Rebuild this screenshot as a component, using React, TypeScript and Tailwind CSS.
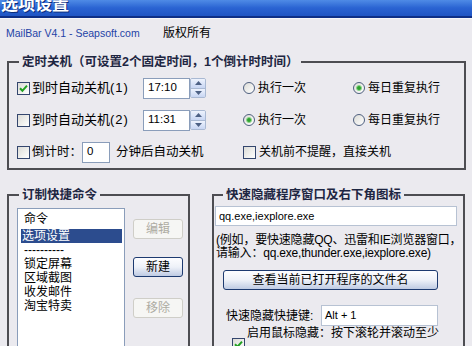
import React from "react";

function Check({ checked = false }: { checked?: boolean }) {
  return (
    <span className="w-[13px] h-[13px] shrink-0 border border-[#34466E] bg-gradient-to-br from-[#DCDCD7] to-white flex items-center justify-center">
      {checked && (
        <svg width="9" height="9" viewBox="0 0 9 9">
          <path d="M1 4.2 L3.4 6.8 L8 1.6" stroke="#21A121" strokeWidth="2" fill="none" />
        </svg>
      )}
    </span>
  );
}

function Radio({ on = false }: { on?: boolean }) {
  return (
    <span className="w-[12px] h-[12px] shrink-0 rounded-full border border-[#4E5F7E] bg-gradient-to-br from-[#DCDCD7] to-white flex items-center justify-center">
      {on && <span className="w-[6px] h-[6px] rounded-full bg-[#2FA12F] border border-[#8CD88C]" />}
    </span>
  );
}

function Spin() {
  return (
    <div className="w-[16px] h-[20px] flex flex-col border border-[#A9B9D3] rounded-[2px] overflow-hidden">
      <div className="flex-1 bg-gradient-to-b from-[#EEF3FD] to-[#C8D6F3] flex items-center justify-center border-b border-[#A9B9D3]">
        <svg width="7" height="4" viewBox="0 0 7 4">
          <path d="M0 4 L3.5 0 L7 4 Z" fill="#4D6185" />
        </svg>
      </div>
      <div className="flex-1 bg-gradient-to-b from-[#EEF3FD] to-[#C8D6F3] flex items-center justify-center">
        <svg width="7" height="4" viewBox="0 0 7 4">
          <path d="M0 0 L3.5 4 L7 0 Z" fill="#4D6185" />
        </svg>
      </div>
    </div>
  );
}

function XpButton({ children, disabled = false, className = "" }: { children: React.ReactNode; disabled?: boolean; className?: string }) {
  return (
    <div
      className={
        (disabled
          ? "border border-[#CFCEC8] bg-[#F6F6F4] text-[#ADABA2] "
          : "border border-[#1D3A70] bg-gradient-to-b from-[#FDFDFF] via-[#EEF1F8] to-[#BFCBE3] text-black ") +
        "rounded-[3px] flex items-center justify-center text-[12px] leading-[14px] " +
        className
      }
    >
      {children}
    </div>
  );
}

const legendCls = "px-[3px] text-[12.5px] leading-[14px] font-bold text-[#1E2642]";

export default function App() {
  return (
    <div className="w-[472px] h-[346px] overflow-hidden bg-[#EBEAEF] text-[12px] text-black font-['Liberation_Sans','Noto_Sans_CJK_SC',sans-serif]">
      {/* title bar */}
      <div className="h-[18px] bg-gradient-to-b from-[#4F8BE6] via-[#2A63D2] to-[#1F55C4] border-b-2 border-[#0E2F86] overflow-hidden">
        <div className="-mt-[5px] pl-[1px] text-white font-bold text-[17px] leading-[20px] [text-shadow:1px_1px_0_#0A2C7A]">
          选项设置
        </div>
      </div>

      {/* header */}
      <div className="h-[37px] flex items-start pt-[8px] border-t border-[#F6F6F9]">
        <span className="ml-[6px] w-[157px] text-[10.5px] leading-[13px] text-[#2343A6]">MailBar V4.1 - Seapsoft.com</span>
        <span className="text-[12px] leading-[13px]">版权所有</span>
      </div>

      {/* group 1 */}
      <fieldset className="ml-[7px] w-[459px] border-2 border-[#4D4D52] p-0 m-0">
        <legend className={"ml-[10px] " + legendCls}>定时关机（可设置2个固定时间，1个倒计时时间）</legend>
        <div className="pl-[8px] pt-[8px] pb-[5px] flex flex-col gap-[10px]">
          <div className="flex items-center h-[22px]">
            <div className="w-[126px] flex items-center gap-[2px]">
              <Check checked />
              <span className="text-[13px] leading-[14px]">
                到时自动关机<span className="tracking-[1px]">(1)</span>
              </span>
            </div>
            <div className="w-[47px] h-[21px] border border-[#8A9DBA] bg-white pl-[4px] flex items-center text-[11.5px]">17:10</div>
            <Spin />
            <div className="ml-[37px] w-[110px] flex items-center gap-[3px]">
              <Radio />
              <span>执行一次</span>
            </div>
            <div className="flex items-center gap-[3px]">
              <Radio on />
              <span>每日重复执行</span>
            </div>
          </div>
          <div className="flex items-center h-[22px]">
            <div className="w-[126px] flex items-center gap-[2px]">
              <Check />
              <span className="text-[13px] leading-[14px]">
                到时自动关机<span className="tracking-[1px]">(2)</span>
              </span>
            </div>
            <div className="w-[47px] h-[21px] border border-[#8A9DBA] bg-white pl-[4px] flex items-center text-[11.5px]">11:31</div>
            <Spin />
            <div className="ml-[37px] w-[110px] flex items-center gap-[3px]">
              <Radio on />
              <span>执行一次</span>
            </div>
            <div className="flex items-center gap-[3px]">
              <Radio />
              <span>每日重复执行</span>
            </div>
          </div>
          <div className="flex items-center h-[22px]">
            <div className="w-[65px] flex items-center gap-[2px]">
              <Check />
              <span className="text-[12.5px]">倒计时：</span>
            </div>
            <div className="w-[28px] h-[21px] border border-[#8A9DBA] bg-white pl-[4px] flex items-center text-[11.5px]">0</div>
            <span className="ml-[6px] w-[127px] text-[12.5px]">分钟后自动关机</span>
            <div className="flex items-center gap-[3px]">
              <Check />
              <span>关机前不提醒，直接关机</span>
            </div>
          </div>
        </div>
      </fieldset>

      <div className="flex mt-[18px]">
        {/* group 2 */}
        <fieldset className="ml-[7px] w-[183px] h-[200px] border-2 border-[#4D4D52] p-0 m-0">
          <legend className={"ml-[10px] " + legendCls}>订制快捷命令</legend>
          <div className="pl-[8px] pt-[6px] flex">
            <div className="w-[108px] h-[150px] border border-[#8A9DBA] bg-white pt-[3px] text-[12px] leading-[14px]">
              <div className="pl-[6px] h-[17px] leading-[14px]">命令</div>
              <div className="ml-[3px] w-[101px] pl-[1px] bg-[#2C4C8E] text-white">选项设置</div>
              <div className="pl-[6px]">----------</div>
              <div className="pl-[6px]">锁定屏幕</div>
              <div className="pl-[6px]">区域截图</div>
              <div className="pl-[6px]">收发邮件</div>
              <div className="pl-[6px]">淘宝特卖</div>
            </div>
            <div className="ml-[8px] flex flex-col pt-[11px]">
              <XpButton disabled className="w-[50px] h-[20px]">编辑</XpButton>
              <XpButton className="w-[50px] h-[20px] mt-[18px]">新建</XpButton>
              <XpButton disabled className="w-[50px] h-[20px] mt-[21px]">移除</XpButton>
            </div>
          </div>
        </fieldset>

        {/* group 3 */}
        <fieldset className="ml-[22px] w-[253px] h-[200px] border-2 border-[#4D4D52] p-0 m-0">
          <legend className={"ml-[9px] " + legendCls}>快速隐藏程序窗口及右下角图标</legend>
          <div className="pl-[1px] pt-[4px] flex flex-col">
            <div className="w-[242px] h-[20px] border border-[#B7C2D3] bg-white pl-[3px] flex items-center text-[11px]">
              qq.exe,iexplore.exe
            </div>
            <div className="mt-[8px] pl-[1px] text-[12px] leading-[13px] whitespace-nowrap tracking-[-0.2px]">
              <div>(例如，要快速隐藏QQ、迅雷和IE浏览器窗口，</div>
              <div>请输入：qq.exe,thunder.exe,iexplore.exe)</div>
            </div>
            <XpButton className="ml-[8px] mt-[10px] w-[215px] h-[20px]">查看当前已打开程序的文件名</XpButton>
            <div className="mt-[15px] flex items-center h-[21px]">
              <span className="ml-[11px] w-[95px]">快速隐藏快捷键:</span>
              <div className="w-[117px] h-[21px] border border-[#B7C2D3] bg-white pl-[3px] flex items-center text-[11px]">
                Alt + 1
              </div>
            </div>
            <div className="mt-[1px] flex items-start">
              <span className="ml-[17px] mt-[11px]">
                <Check checked />
              </span>
              <span className="ml-[2px] leading-[13px]">启用鼠标隐藏：按下滚轮并滚动至少</span>
            </div>
          </div>
        </fieldset>
      </div>
    </div>
  );
}
